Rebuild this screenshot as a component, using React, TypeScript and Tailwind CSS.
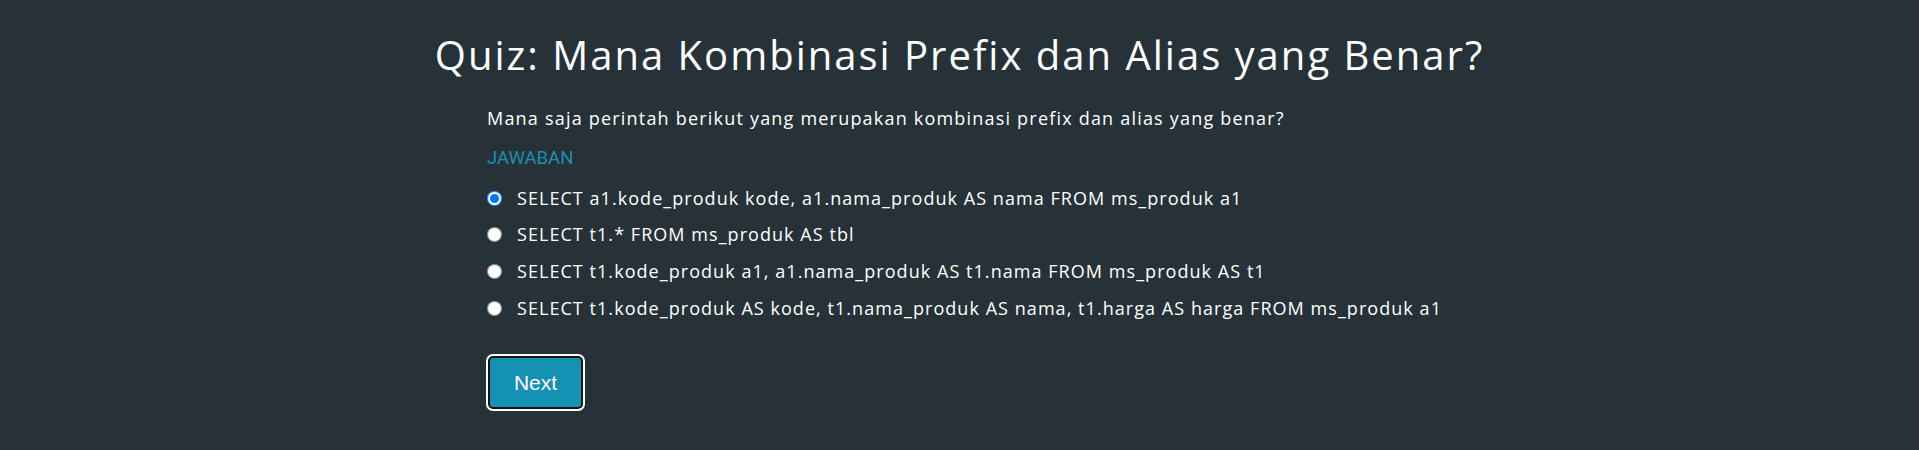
import React, { useState } from 'react';

const options = [
  'SELECT a1.kode_produk kode, a1.nama_produk AS nama FROM ms_produk a1',
  'SELECT t1.* FROM ms_produk AS tbl',
  'SELECT t1.kode_produk a1, a1.nama_produk AS t1.nama FROM ms_produk AS t1',
  'SELECT t1.kode_produk AS kode, t1.nama_produk AS nama, t1.harga AS harga FROM ms_produk a1',
];

const App: React.FC = () => {
  const [selected, setSelected] = useState(0);

  return (
    <div className="min-h-screen bg-[#263238] pt-[31px] font-['Open_Sans',sans-serif] text-white">
      <h1 className="text-center text-[40px] leading-[48px] font-medium tracking-[2px]">
        Quiz: Mana Kombinasi Prefix dan Alias yang Benar?
      </h1>

      <div className="mx-auto w-[945px]">
        {/* Question */}
        <p className="mt-[25px] text-[18px] leading-[28px] tracking-[1.2px]">
          Mana saja perintah berikut yang merupakan kombinasi prefix dan alias yang benar?
        </p>

        <p className="mt-[14px] font-['Roboto',sans-serif] text-[18.5px] leading-[24px] text-[#1a8fb0]">
          JAWABAN
        </p>

        {/* Answers */}
        <div className="mt-[10px] flex flex-col">
          {options.map((opt, i) => (
            <label key={i} className="flex h-[36.6px] items-center whitespace-nowrap">
              <input
                type="radio"
                name="answer"
                checked={selected === i}
                onChange={() => setSelected(i)}
                className="m-0 h-[15px] w-[15px] shrink-0"
              />
              <span className="ml-[15px] text-[18px] tracking-[1.05px]">{opt}</span>
            </label>
          ))}
        </div>

        <button className="mt-[30px] ml-[1px] h-[53px] w-[95px] rounded-[5px] border-2 border-[#111] bg-[#1591b3] font-['Liberation_Sans',sans-serif] text-[21px] text-white outline-2 outline-white">
          Next
        </button>
      </div>
    </div>
  );
};

export default App;
